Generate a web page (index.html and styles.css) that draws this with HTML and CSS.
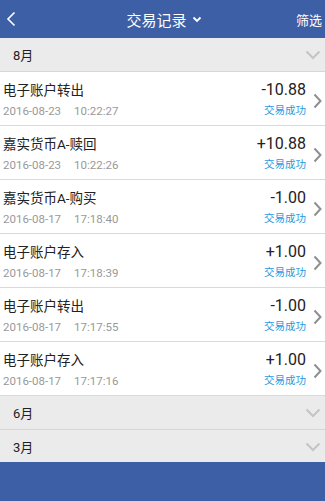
FILE: index.html
```html
<!DOCTYPE html>
<html lang="zh">
<head>
    <meta charset="UTF-8">
    <meta name="viewport" content="width=device-width, initial-scale=1.0">
    <title>交易记录</title>
    <link rel="stylesheet" href="styles.css">
</head>
<body>

    <div class="topbar">
        <span class="back">
            <svg width="10" height="16" viewBox="0 0 10 16"><path d="M8.5 1.5 L2 8 L8.5 14.5" fill="none" stroke="#fff" stroke-width="1.6"/></svg>
        </span>
        <span class="title">交易记录
            <svg width="10" height="7" viewBox="0 0 10 7"><path d="M1.5 1.5 L5 5 L8.5 1.5" fill="none" stroke="#fff" stroke-width="1.8"/></svg>
        </span>
        <span class="filter">筛选</span>
    </div>

    <!-- month groups -->
    <div class="month">
        <span>8月</span>
        <svg class="down" width="16" height="10" viewBox="0 0 16 10"><path d="M1.5 1.5 L8 8 L14.5 1.5" fill="none" stroke="#c4c4c4" stroke-width="2"/></svg>
    </div>

    <ul class="records">
        <li class="record">
            <div class="left">
                <div class="name">电子账户转出</div>
                <div class="time">2016-08-23<span class="clock">10:22:27</span></div>
            </div>
            <div class="right">
                <div class="amount">-10.88</div>
                <div class="status">交易成功</div>
            </div>
            <svg class="arrow" width="9" height="16" viewBox="0 0 9 16"><path d="M1.5 1.5 L7.5 8 L1.5 14.5" fill="none" stroke="#8f8f8f" stroke-width="2"/></svg>
        </li>
        <li class="record">
            <div class="left">
                <div class="name">嘉实货币A-赎回</div>
                <div class="time">2016-08-23<span class="clock">10:22:26</span></div>
            </div>
            <div class="right">
                <div class="amount">+10.88</div>
                <div class="status">交易成功</div>
            </div>
            <svg class="arrow" width="9" height="16" viewBox="0 0 9 16"><path d="M1.5 1.5 L7.5 8 L1.5 14.5" fill="none" stroke="#8f8f8f" stroke-width="2"/></svg>
        </li>
        <li class="record">
            <div class="left">
                <div class="name">嘉实货币A-购买</div>
                <div class="time">2016-08-17<span class="clock">17:18:40</span></div>
            </div>
            <div class="right">
                <div class="amount">-1.00</div>
                <div class="status">交易成功</div>
            </div>
            <svg class="arrow" width="9" height="16" viewBox="0 0 9 16"><path d="M1.5 1.5 L7.5 8 L1.5 14.5" fill="none" stroke="#8f8f8f" stroke-width="2"/></svg>
        </li>
        <li class="record">
            <div class="left">
                <div class="name">电子账户存入</div>
                <div class="time">2016-08-17<span class="clock">17:18:39</span></div>
            </div>
            <div class="right">
                <div class="amount">+1.00</div>
                <div class="status">交易成功</div>
            </div>
            <svg class="arrow" width="9" height="16" viewBox="0 0 9 16"><path d="M1.5 1.5 L7.5 8 L1.5 14.5" fill="none" stroke="#8f8f8f" stroke-width="2"/></svg>
        </li>
        <li class="record">
            <div class="left">
                <div class="name">电子账户转出</div>
                <div class="time">2016-08-17<span class="clock">17:17:55</span></div>
            </div>
            <div class="right">
                <div class="amount">-1.00</div>
                <div class="status">交易成功</div>
            </div>
            <svg class="arrow" width="9" height="16" viewBox="0 0 9 16"><path d="M1.5 1.5 L7.5 8 L1.5 14.5" fill="none" stroke="#8f8f8f" stroke-width="2"/></svg>
        </li>
        <li class="record">
            <div class="left">
                <div class="name">电子账户存入</div>
                <div class="time">2016-08-17<span class="clock">17:17:16</span></div>
            </div>
            <div class="right">
                <div class="amount">+1.00</div>
                <div class="status">交易成功</div>
            </div>
            <svg class="arrow" width="9" height="16" viewBox="0 0 9 16"><path d="M1.5 1.5 L7.5 8 L1.5 14.5" fill="none" stroke="#8f8f8f" stroke-width="2"/></svg>
        </li>
    </ul>

    <div class="month">
        <span>6月</span>
        <svg class="down" width="16" height="10" viewBox="0 0 16 10"><path d="M1.5 1.5 L8 8 L14.5 1.5" fill="none" stroke="#c4c4c4" stroke-width="2"/></svg>
    </div>
    <div class="month last">
        <span>3月</span>
        <svg class="down" width="16" height="10" viewBox="0 0 16 10"><path d="M1.5 1.5 L8 8 L14.5 1.5" fill="none" stroke="#c4c4c4" stroke-width="2"/></svg>
    </div>

    <div class="bottombar"></div>

</body>
</html>
```

FILE: styles.css
```css
html, body { height: 100%; }
body { margin: 0; font-family: Roboto, "Noto Sans CJK SC", sans-serif; background: #fff; display: flex; flex-direction: column; overflow: hidden; }

.topbar { height: 38px; flex: none; background: #3d5fa6; color: #fff; display: flex; align-items: center; justify-content: space-between; padding: 0 3px 0 6px; }
.back { display: flex; width: 40px; }
.title { font-size: 15px; display: flex; align-items: center; gap: 5px; }
.title svg { margin-top: 1px; }
.filter { font-size: 13px; width: 40px; text-align: right; }

.month { height: 33px; flex: none; background: #ebebeb; border-bottom: 1px solid #d6d6d6; display: flex; align-items: center; justify-content: space-between; padding: 0 4px 0 13px; font-size: 13px; color: #222; }
.month.last { height: 32px; border-bottom: none; }
.month .down { margin-top: 1px; }

.records { list-style: none; margin: 0; padding: 0; flex: none; }
.record { height: 53px; border-bottom: 1px solid #d9d9d9; display: flex; align-items: center; padding: 0 3px 0 3px; }
.left { flex: 1; }
.name { font-size: 13.5px; color: #222; line-height: 18px; margin-top: 1px; }
.time { font-size: 11.5px; color: #999; margin-top: 5px; line-height: 14px; }
.clock { margin-left: 13px; }
.right { text-align: right; }
.amount { font-size: 16px; color: #222; line-height: 18px; margin-top: 1px; }
.status { font-size: 10.5px; color: #1f9ae0; margin-top: 5px; line-height: 14px; }
.arrow { margin-left: 7px; margin-top: 4px; }

.bottombar { flex: 1; background: #3d5fa6; }
```
